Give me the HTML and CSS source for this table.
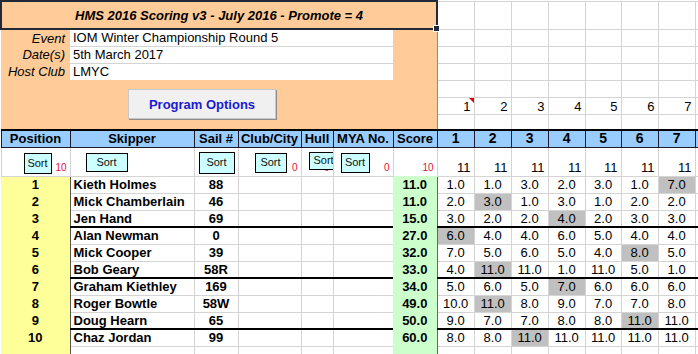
FILE: index.html
```html
<!DOCTYPE html>
<html>
<head>
<meta charset="utf-8">
<link rel="stylesheet" href="styles.css">
</head>
<body>
<div class="sheet">
<table class="grid">
<colgroup>
<col class="w-pos"><col class="w-skip"><col class="w-sail"><col class="w-club"><col class="w-hull"><col class="w-mya"><col class="w-score">
<col class="w-r"><col class="w-r"><col class="w-r"><col class="w-r"><col class="w-r5"><col class="w-r"><col class="w-r"><col class="w-r">
</colgroup>
<tr class="row-title">
<td colspan="7" class="title">HMS 2016 Scoring v3 - July 2016 - Promote = 4</td>
<td class="g"></td><td class="g"></td><td class="g"></td><td class="g"></td><td class="g"></td><td class="g"></td><td class="g"></td><td class="g"></td>
</tr>
<tr class="row">
<td class="or lbl">Event</td><td colspan="5" class="val">IOM Winter Championship Round 5</td><td class="or or-r"></td>
<td class="g"></td><td class="g"></td><td class="g"></td><td class="g"></td><td class="g"></td><td class="g"></td><td class="g"></td><td class="g"></td>
</tr>
<tr class="row">
<td class="or lbl">Date(s)</td><td colspan="5" class="val">5th March 2017</td><td class="or or-r"></td>
<td class="g"></td><td class="g"></td><td class="g"></td><td class="g"></td><td class="g"></td><td class="g"></td><td class="g"></td><td class="g"></td>
</tr>
<tr class="row">
<td class="or lbl">Host Club</td><td colspan="5" class="val val-last">LMYC</td><td class="or or-r"></td>
<td class="g"></td><td class="g"></td><td class="g"></td><td class="g"></td><td class="g"></td><td class="g"></td><td class="g"></td><td class="g"></td>
</tr>
<tr class="row">
<td colspan="7" rowspan="3" class="or or-r btn-cell"><button class="prog">Program Options</button></td>
<td class="g"></td><td class="g"></td><td class="g"></td><td class="g"></td><td class="g"></td><td class="g"></td><td class="g"></td><td class="g"></td>
</tr>
<tr class="row">
<td class="g rn note">1</td><td class="g rn">2</td><td class="g rn">3</td><td class="g rn">4</td><td class="g rn">5</td><td class="g rn">6</td><td class="g rn">7</td><td class="g rn"></td>
</tr>
<tr class="row-last">
<td class="g"></td><td class="g"></td><td class="g"></td><td class="g"></td><td class="g"></td><td class="g"></td><td class="g"></td><td class="g"></td>
</tr>
<tr class="row-head">
<th class="hd">Position</th><th class="hd">Skipper</th><th class="hd">Sail #</th><th class="hd">Club/City</th><th class="hd">Hull</th><th class="hd">MYA No.</th><th class="hd">Score</th>
<th class="hd hn">1</th><th class="hd hn">2</th><th class="hd hn">3</th><th class="hd hn">4</th><th class="hd hn">5</th><th class="hd hn">6</th><th class="hd hn">7</th><th class="hd hn"></th>
</tr>
<tr class="row-sort">
<td class="srt"><span class="sb sb-pos">Sort</span><span class="red">10</span></td>
<td class="srt"><span class="sb sb-skip">Sort</span></td>
<td class="srt"><span class="sb sb-sail">Sort</span></td>
<td class="srt"><span class="red">0</span><span class="sb sb-club">Sort</span></td>
<td class="srt"><span class="red">0</span><span class="sb sb-hull">Sort</span></td>
<td class="srt"><span class="sb sb-mya">Sort</span><span class="red">0</span></td>
<td class="srt"><span class="red">10</span></td>
<td class="srt">11</td><td class="srt">11</td><td class="srt">11</td><td class="srt">11</td><td class="srt">11</td><td class="srt">11</td><td class="srt">11</td><td class="srt"></td>
</tr>
<tr class="row">
<td class="pos">1</td><td class="g name">Kieth Holmes</td><td class="g sail">88</td><td class="g"></td><td class="g"></td><td class="g"></td><td class="score">11.0</td>
<td class="g r">1.0</td><td class="g r">1.0</td><td class="g r">3.0</td><td class="g r">2.0</td><td class="g r">3.0</td><td class="g r">1.0</td><td class="g r hl">7.0</td><td class="g r"></td>
</tr>
<tr class="row">
<td class="pos">2</td><td class="g name">Mick Chamberlain</td><td class="g sail">46</td><td class="g"></td><td class="g"></td><td class="g"></td><td class="score">11.0</td>
<td class="g r">2.0</td><td class="g r hl">3.0</td><td class="g r">1.0</td><td class="g r">3.0</td><td class="g r">1.0</td><td class="g r">2.0</td><td class="g r">2.0</td><td class="g r"></td>
</tr>
<tr class="row sep">
<td class="pos">3</td><td class="g name">Jen Hand</td><td class="g sail">69</td><td class="g"></td><td class="g"></td><td class="g"></td><td class="score">15.0</td>
<td class="g r">3.0</td><td class="g r">2.0</td><td class="g r">2.0</td><td class="g r hl">4.0</td><td class="g r">2.0</td><td class="g r">3.0</td><td class="g r">3.0</td><td class="g r"></td>
</tr>
<tr class="row">
<td class="pos">4</td><td class="g name">Alan Newman</td><td class="g sail">0</td><td class="g"></td><td class="g"></td><td class="g"></td><td class="score">27.0</td>
<td class="g r hl">6.0</td><td class="g r">4.0</td><td class="g r">4.0</td><td class="g r">6.0</td><td class="g r">5.0</td><td class="g r">4.0</td><td class="g r">4.0</td><td class="g r"></td>
</tr>
<tr class="row">
<td class="pos">5</td><td class="g name">Mick Cooper</td><td class="g sail">39</td><td class="g"></td><td class="g"></td><td class="g"></td><td class="score">32.0</td>
<td class="g r">7.0</td><td class="g r">5.0</td><td class="g r">6.0</td><td class="g r">5.0</td><td class="g r">4.0</td><td class="g r hl">8.0</td><td class="g r">5.0</td><td class="g r"></td>
</tr>
<tr class="row sep">
<td class="pos">6</td><td class="g name">Bob Geary</td><td class="g sail">58R</td><td class="g"></td><td class="g"></td><td class="g"></td><td class="score">33.0</td>
<td class="g r">4.0</td><td class="g r hl">11.0</td><td class="g r">11.0</td><td class="g r">1.0</td><td class="g r">11.0</td><td class="g r">5.0</td><td class="g r">1.0</td><td class="g r"></td>
</tr>
<tr class="row">
<td class="pos">7</td><td class="g name">Graham Kiethley</td><td class="g sail">169</td><td class="g"></td><td class="g"></td><td class="g"></td><td class="score">34.0</td>
<td class="g r">5.0</td><td class="g r">6.0</td><td class="g r">5.0</td><td class="g r hl">7.0</td><td class="g r">6.0</td><td class="g r">6.0</td><td class="g r">6.0</td><td class="g r"></td>
</tr>
<tr class="row">
<td class="pos">8</td><td class="g name">Roger Bowtle</td><td class="g sail">58W</td><td class="g"></td><td class="g"></td><td class="g"></td><td class="score">49.0</td>
<td class="g r">10.0</td><td class="g r hl">11.0</td><td class="g r">8.0</td><td class="g r">9.0</td><td class="g r">7.0</td><td class="g r">7.0</td><td class="g r">8.0</td><td class="g r"></td>
</tr>
<tr class="row sep">
<td class="pos">9</td><td class="g name">Doug Hearn</td><td class="g sail">65</td><td class="g"></td><td class="g"></td><td class="g"></td><td class="score">50.0</td>
<td class="g r">9.0</td><td class="g r">7.0</td><td class="g r">7.0</td><td class="g r">8.0</td><td class="g r">8.0</td><td class="g r hl">11.0</td><td class="g r">11.0</td><td class="g r"></td>
</tr>
<tr class="row">
<td class="pos">10</td><td class="g name">Chaz Jordan</td><td class="g sail">99</td><td class="g"></td><td class="g"></td><td class="g"></td><td class="score">60.0</td>
<td class="g r">8.0</td><td class="g r">8.0</td><td class="g r hl">11.0</td><td class="g r">11.0</td><td class="g r">11.0</td><td class="g r">11.0</td><td class="g r">11.0</td><td class="g r"></td>
</tr>
<tr class="row">
<td class="pos"></td><td class="g"></td><td class="g"></td><td class="g"></td><td class="g"></td><td class="g"></td><td class="score"></td>
<td class="g"></td><td class="g"></td><td class="g"></td><td class="g"></td><td class="g"></td><td class="g"></td><td class="g"></td><td class="g"></td>
</tr>
</table>
</div>
</body>
</html>
```

FILE: styles.css
```css
html, body {
  margin: 0;
  padding: 0;
  background: #fff;
  overflow: hidden;
}

.sheet {
  width: 698px;
  height: 354px;
  overflow: hidden;
}

.grid {
  border-collapse: collapse;
  table-layout: fixed;
  width: 731px;
  font-family: "Liberation Sans", Arial, sans-serif;
  font-size: 13px;
  color: #000;
}

.w-pos { width: 69px; }
.w-skip { width: 124px; }
.w-sail { width: 44px; }
.w-club { width: 63px; }
.w-hull { width: 32px; }
.w-mya { width: 60px; }
.w-score { width: 44px; }
.w-r { width: 37px; }
.w-r5 { width: 36px; }

.grid td,
.grid th {
  padding: 0;
  overflow: hidden;
  white-space: nowrap;
  line-height: 15px;
}

.row-title { height: 28px; }
.row { height: 17px; }
.row-last { height: 16px; }
.row-head { height: 17px; }
.row-sort { height: 29px; }

.g {
  border: 1px solid #d4d4d4;
}

.title {
  position: relative;
  overflow: visible !important;
  background: #ffcc99;
  border: 2px solid #1f2a36;
  font-weight: bold;
  font-style: italic;
  text-align: center;
}

.title::after {
  content: "";
  position: absolute;
  right: -4px;
  bottom: -4px;
  width: 5px;
  height: 5px;
  background: #1f2a36;
  border: 1px solid #fff;
}

.or {
  background: #ffcc99;
}

.or-r {
  border-right: 1px solid #8a8a8a;
}

.lbl {
  font-style: italic;
  text-align: right;
  padding-right: 5px !important;
}

.val {
  background: #fff;
  padding-left: 3px !important;
  border-bottom: 1px solid #d4d4d4;
}

.val-last {
  border-bottom: none;
}

.btn-cell {
  vertical-align: top;
  padding: 9px 0 0 127px !important;
}

.prog {
  display: block;
  width: 148px;
  height: 30px;
  margin: 0;
  padding: 0;
  background: #f0f0f0;
  border: 1px solid #c8c8c8;
  box-shadow: 1px 1px 0 #8c8c8c;
  color: #1a1ad0;
  font-family: "Liberation Sans", Arial, sans-serif;
  font-size: 13px;
  font-weight: bold;
}

.rn {
  text-align: right;
  padding-right: 3px !important;
  vertical-align: bottom;
}

.note {
  position: relative;
}

.note::after {
  content: "";
  position: absolute;
  top: 0;
  right: 0;
  border-top: 5px solid #e00000;
  border-left: 5px solid transparent;
}

.hd {
  background: #99ccff;
  border: 1px solid #1a1a2a;
  border-top: 2px solid #000;
  font-weight: bold;
  text-align: center;
  font-size: 13px;
}

.hn {
  font-family: "Liberation Sans Narrow", "Liberation Sans", Arial, sans-serif;
  font-size: 14px;
}

.srt {
  position: relative;
  border: 1px solid #d4d4d4;
  vertical-align: bottom;
  text-align: right;
  padding-right: 3px !important;
  padding-bottom: 1px !important;
}

.red {
  color: #e8103a;
  font-size: 10px;
}

.sb {
  position: absolute;
  box-sizing: border-box;
  display: flex;
  align-items: center;
  justify-content: center;
  background: #ccffff;
  border: 1px solid #000;
  color: #111;
  font-size: 11px;
  line-height: 1;
  overflow: hidden;
}

.sb-pos { left: 22px; top: 5px; width: 28px; height: 21px; }
.sb-skip { left: 15px; top: 5px; width: 42px; height: 19px; }
.sb-sail { left: 4px; top: 4px; width: 36px; height: 22px; }
.sb-club { left: 16px; top: 5px; width: 32px; height: 20px; }
.sb-hull { left: 7px; top: 4px; width: 25px; height: 18px; justify-content: flex-start; padding-left: 4px; }
.sb-mya { left: 7px; top: 5px; width: 29px; height: 20px; }

.pos {
  background: #ffff99;
  border-right: 1px solid #555;
  font-weight: bold;
  text-align: center;
}

.name {
  font-weight: bold;
  padding-left: 3px !important;
}

.sail {
  font-weight: bold;
  text-align: center;
}

.score {
  background: #ccffcc;
  border-left: hidden;
  border-top: hidden;
  border-bottom: hidden;
  border-right: 1px solid #666;
  font-weight: bold;
  text-align: center;
}

.r {
  text-align: center;
}

.hl {
  background: #c0c0c0;
}

.sep td.g {
  border-bottom: 2px solid #000;
}
```
